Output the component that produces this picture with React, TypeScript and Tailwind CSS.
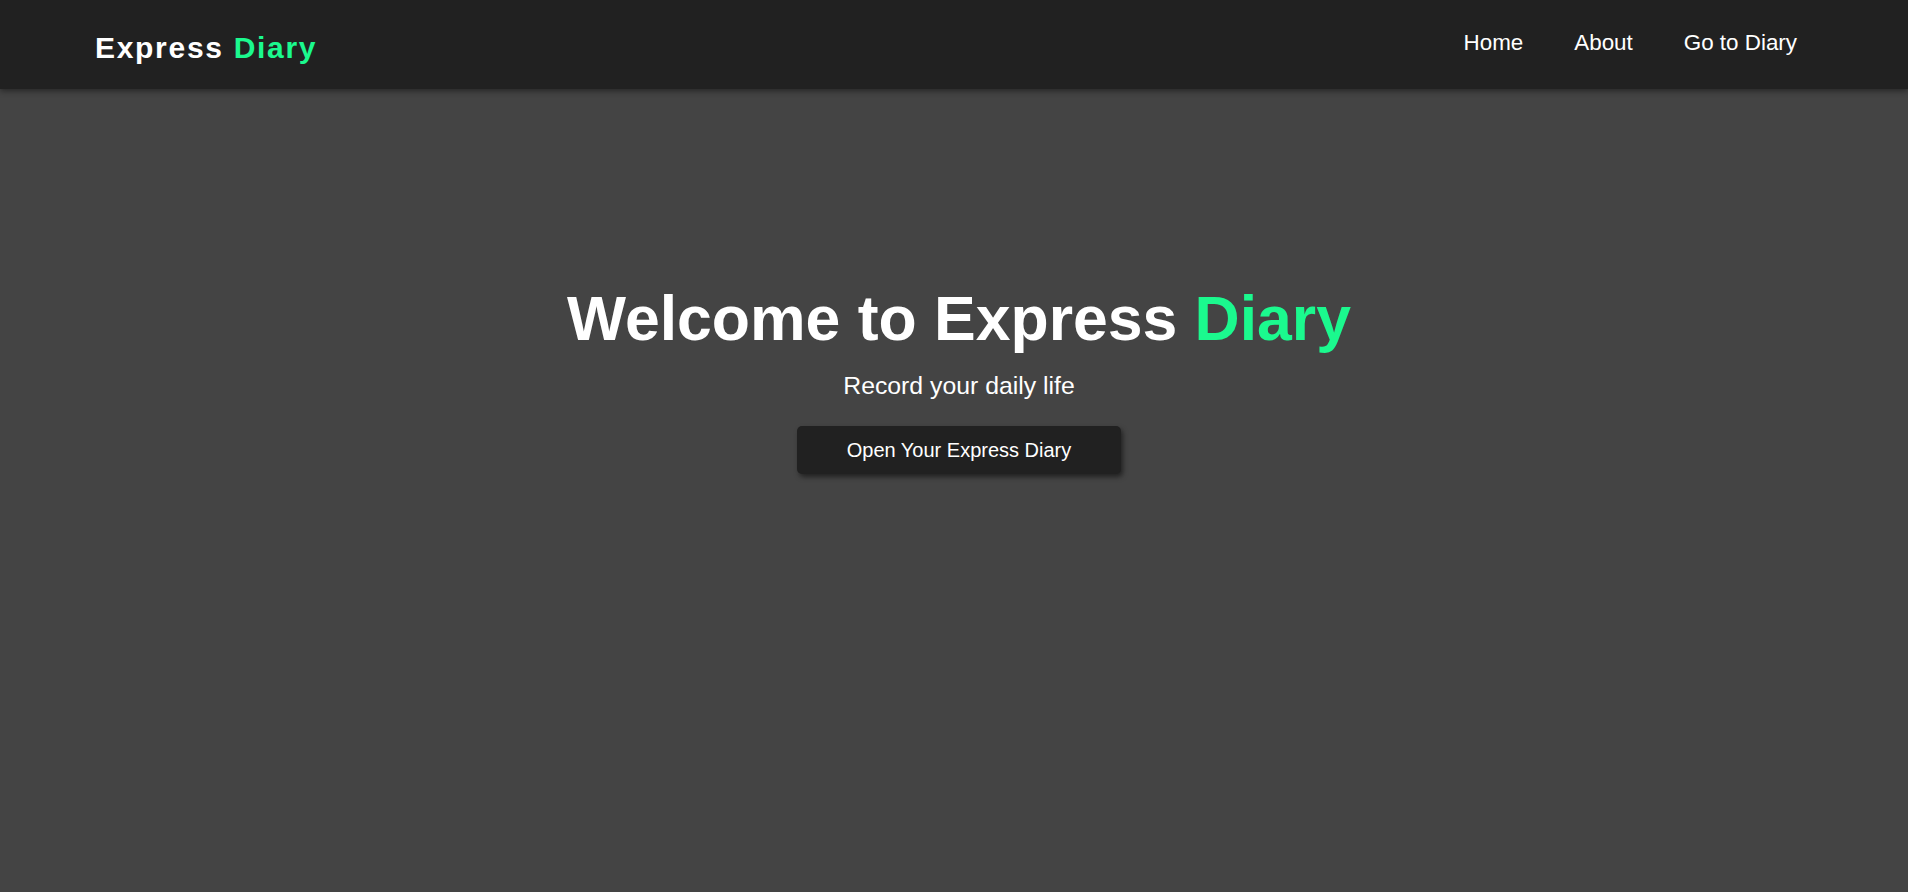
const NAV_LINKS = ["Home", "About", "Go to Diary"];

export default function App() {
  return (
    <div className="min-h-screen bg-[#444444] text-white font-['Liberation_Sans',Arial,sans-serif]">
      <nav className="relative z-10 flex h-[89px] items-start justify-between bg-[#212121] pl-[95px] pr-[111px] pt-[30px] shadow-[0_2px_6px_rgba(0,0,0,0.45)]">
        <a href="#" className="mt-px text-[30px] font-bold leading-[34px] tracking-[1.7px]">
          Express <span className="text-[#1bf98e]">Diary</span>
        </a>
        <ul className="flex gap-[51px] text-[22.4px] leading-[26px]">
          {NAV_LINKS.map((link) => (
            <li key={link}>
              <a href="#">{link}</a>
            </li>
          ))}
        </ul>
      </nav>

      <main className="flex flex-col items-center pl-[10px] pt-[193px] text-center">
        <h1 className="text-[62.5px] font-bold leading-[72px]">
          Welcome to Express <span className="text-[#1bf98e]">Diary</span>
        </h1>
        <p className="mt-[18px] text-[24.8px] leading-[28px]">Record your daily life</p>
        <button
          type="button"
          className="mt-[26px] flex h-[48px] w-[324px] items-center justify-center rounded-[5px] bg-[#212121] text-[20px] shadow-[2px_3px_5px_rgba(0,0,0,0.5)]"
        >
          Open Your Express Diary
        </button>
      </main>
    </div>
  );
}
